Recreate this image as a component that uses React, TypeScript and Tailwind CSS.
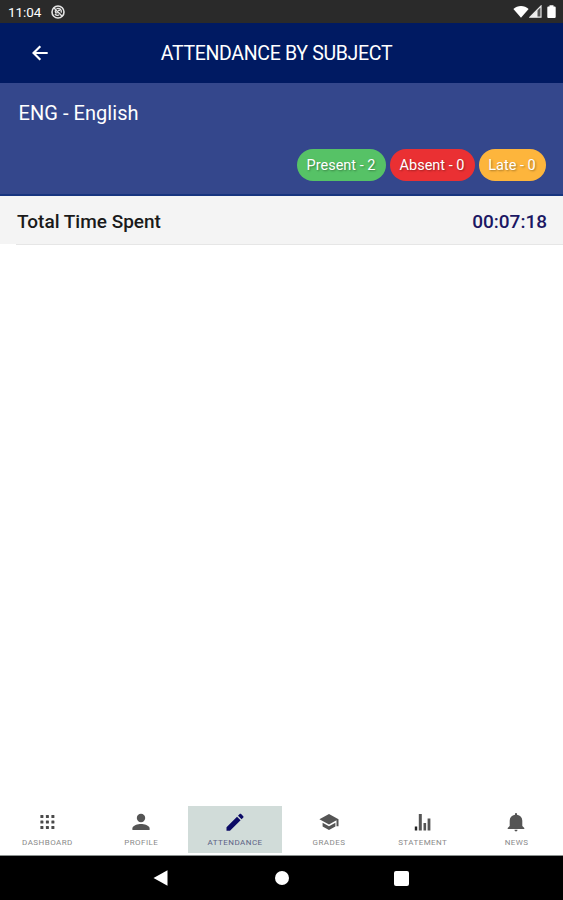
import { ReactNode } from "react";
import clsx from "clsx";

const badges = [
  { label: "Present - 2", className: "w-[89px] bg-[#56c266]" },
  { label: "Absent - 0", className: "w-[85px] bg-[#ea3033]" },
  { label: "Late - 0", className: "w-[67px] bg-[#fdb53c]" },
];

const tabs: { label: string; icon: ReactNode; active?: boolean }[] = [
  {
    label: "DASHBOARD",
    icon: (
      <svg viewBox="0 0 20 20" className="size-5" fill="#4a4a4a">
        {[1.9, 7.4, 12.9].map((y) =>
          [3.4, 8.9, 14.4].map((x) => (
            <rect key={`${x}-${y}`} x={x} y={y} width="3" height="3" rx="0.5" />
          ))
        )}
      </svg>
    ),
  },
  {
    label: "PROFILE",
    icon: (
      <svg viewBox="0 0 20 20" className="size-5" fill="#555">
        <circle cx="10" cy="5" r="4.2" />
        <path d="M1.4 17v-1.5c0-3 5.7-4.4 8.6-4.4s8.6 1.4 8.6 4.4V17z" />
      </svg>
    ),
  },
  {
    label: "ATTENDANCE",
    active: true,
    icon: (
      <svg viewBox="0 0 20 20" className="size-5" fill="#0c0b66">
        <path d="M1.5 17.7v-3.5L12 3.7l3.6 3.6L5 17.7zM13 2.7 14.7 1c.4-.4 1-.4 1.4 0l2.2 2.2c.4.4.4 1 0 1.4l-1.7 1.7z" />
      </svg>
    ),
  },
  {
    label: "GRADES",
    icon: (
      <svg viewBox="0 0 20 20" className="ml-px size-5" fill="#555">
        <path d="M10 1 .4 6.2 10 11.4l7.5-4.1v6h2V6.2z" />
        <path d="M3.6 9.7v3.7L10 17l6.4-3.6V9.7L10 13.2z" />
      </svg>
    ),
  },
  {
    label: "STATEMENT",
    icon: (
      <svg viewBox="0 0 20 20" className="ml-px size-5" fill="#555">
        <rect x="1.8" y="13.5" width="2.4" height="4" fill="#222" />
        <rect x="5.8" y="1" width="3" height="16.5" />
        <rect x="10.5" y="10" width="2.6" height="7.5" />
        <rect x="14.6" y="5.5" width="2.8" height="12" />
      </svg>
    ),
  },
  {
    label: "NEWS",
    icon: (
      <svg viewBox="0 0 20 20" className="size-5" fill="#555">
        <path d="M9 1.8V1c0-1.3 2-1.3 2 0v.8c3.3.6 5.3 2.9 5.3 6v5.1l2 2V16H1.7v-1.1l2-2V7.8c0-3.1 2-5.4 5.3-6zM8.5 16.7h3c0 2.3-3 2.3-3 0z" />
      </svg>
    ),
  },
];

const StatusBar = () => (
  <div className="flex h-[23px] items-center bg-[#2a2a2a] pr-[7px] pl-2 text-white">
    <span className="pt-[2px] text-[13.5px] leading-none tracking-[-0.1px]">11:04</span>
    <svg viewBox="0 0 14 14" className="ml-[10px] size-[14px]" fill="none" stroke="#e4e4e4">
      <circle cx="7" cy="7" r="6" strokeWidth="1.6" />
      <path
        d="M2.8 2.8 11.2 11.2M4 8.8c1 1.8 3 2 4 1M5.5 3.6c3-.8 5.2.7 4.8 4M4.5 5.5c-.7 1.6.5 2.8 2 2.2M7 5.4h2"
        strokeWidth="1.4"
      />
    </svg>
    <svg viewBox="0 0 16 13" className="ml-auto h-[13px] w-4" fill="#fff">
      <path d="M8 12.7.4 4C4.4.1 11.6.1 15.6 4z" />
    </svg>
    <svg viewBox="0 0 13 13" className="h-[13px] w-[13px]">
      <path d="M12 1v11.2H1z" fill="#555" stroke="#e6e6e6" strokeWidth="1.2" />
      <path d="M8.5 5v7.2H1z" fill="#eee" />
    </svg>
    <svg viewBox="0 0 9 13" className="ml-[5px] h-[13px] w-[9px]" fill="#fff">
      <path d="M2.5 1.5V.3h4v1.2h1.3c.5 0 .9.4.9.9V12c0 .5-.4.9-.9.9H1.2c-.5 0-.9-.4-.9-.9V2.4c0-.5.4-.9.9-.9z" />
    </svg>
  </div>
);

const Header = () => (
  <header className="grid h-[60px] grid-cols-[80px_1fr_90px] items-center bg-[#001a62] text-white">
    <button className="pl-8">
      <svg viewBox="0 0 16 16" className="size-4" fill="none" stroke="currentColor" strokeWidth="2.2">
        <path d="M15.7 8H1.8M8.3 1.2 1.5 8l6.8 6.8" />
      </svg>
    </button>
    <h1 className="pt-[2px] text-center text-[19.5px] leading-none tracking-[-0.32px] whitespace-nowrap">
      ATTENDANCE BY SUBJECT
    </h1>
  </header>
);

const SubjectPanel = () => (
  <section className="flex h-[113px] flex-col border-b-2 border-[#17357f] bg-[#34478c] text-white">
    <h2 className="mt-[18px] ml-[18.5px] text-[20px] leading-[24px] tracking-[0.05px]">
      ENG - English
    </h2>
    <div className="mt-6 mr-[17.5px] flex justify-end gap-1">
      {badges.map((badge) => (
        <span
          key={badge.label}
          className={clsx(
            "flex h-8 items-center justify-center rounded-full pt-[2px] text-[14.5px] whitespace-nowrap text-shadow-[1px_1px_2px_rgb(0_0_0/0.35)]",
            badge.className
          )}
        >
          {badge.label}
        </span>
      ))}
    </div>
  </section>
);

const TabBar = () => (
  <nav className="grid h-[50px] grid-cols-6 border-b border-[#8b918f]">
    {tabs.map((tab) => (
      <div
        key={tab.label}
        className={clsx(
          "flex h-[47px] flex-col items-center pt-[7px]",
          tab.active ? "bg-[#d1dcd9] text-[#5d6385]" : "text-[#8a8a8a]"
        )}
      >
        {tab.icon}
        <span className="mt-[5px] pl-px text-[8px] leading-[10px] tracking-[0.45px]">{tab.label}</span>
      </div>
    ))}
  </nav>
);

const SystemNav = () => (
  <div className="flex h-11 items-center bg-black px-[153px]">
    <svg viewBox="0 0 16 16" className="size-4" fill="#fff">
      <path d="M.5 8 14.5.2v15.6z" />
    </svg>
    <div className="mx-auto size-[14px] rounded-full bg-white" />
    <div className="mr-px size-[15px] rounded-[2px] bg-white" />
  </div>
);

export default function App() {
  return (
    <div className="flex h-[900px] w-[563px] flex-col overflow-hidden bg-white font-['Roboto',sans-serif]">
      <StatusBar />
      <Header />
      <SubjectPanel />
      <div className="flex h-[48px] items-center justify-between bg-[#f4f4f4] pt-1 pr-4 pl-[17px] text-[19px] font-medium">
        <span className="text-[#1a1a1a]">Total Time Spent</span>
        <span className="text-[#1b1763]">00:07:18</span>
      </div>
      <div className="ml-4 h-px bg-[#e6e6e6]" />
      <main className="flex-1" />
      <TabBar />
      <SystemNav />
    </div>
  );
}
